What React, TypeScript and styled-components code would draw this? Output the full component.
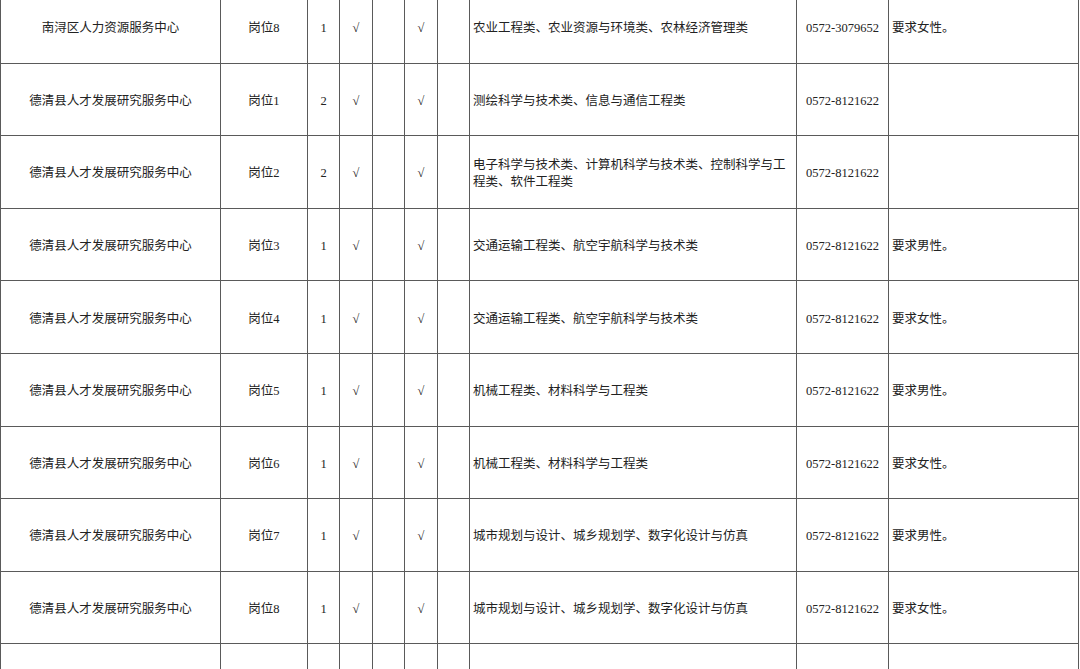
import React from 'react';
import styled, {createGlobalStyle} from 'styled-components';

type Job = {
  unit: string;
  post: string;
  count: string;
  a: boolean;
  b: boolean;
  major: string;
  phone: string;
  note: string;
};

const DQ = '德清县人才发展研究服务中心';
const PHONE = '0572-8121622';

const jobs: Job[] = [
  {unit: '南浔区人力资源服务中心', post: '岗位8', count: '1', a: true, b: true, major: '农业工程类、农业资源与环境类、农林经济管理类', phone: '0572-3079652', note: '要求女性。'},
  {unit: DQ, post: '岗位1', count: '2', a: true, b: true, major: '测绘科学与技术类、信息与通信工程类', phone: PHONE, note: ''},
  {unit: DQ, post: '岗位2', count: '2', a: true, b: true, major: '电子科学与技术类、计算机科学与技术类、控制科学与工程类、软件工程类', phone: PHONE, note: ''},
  {unit: DQ, post: '岗位3', count: '1', a: true, b: true, major: '交通运输工程类、航空宇航科学与技术类', phone: PHONE, note: '要求男性。'},
  {unit: DQ, post: '岗位4', count: '1', a: true, b: true, major: '交通运输工程类、航空宇航科学与技术类', phone: PHONE, note: '要求女性。'},
  {unit: DQ, post: '岗位5', count: '1', a: true, b: true, major: '机械工程类、材料科学与工程类', phone: PHONE, note: '要求男性。'},
  {unit: DQ, post: '岗位6', count: '1', a: true, b: true, major: '机械工程类、材料科学与工程类', phone: PHONE, note: '要求女性。'},
  {unit: DQ, post: '岗位7', count: '1', a: true, b: true, major: '城市规划与设计、城乡规划学、数字化设计与仿真', phone: PHONE, note: '要求男性。'},
  {unit: DQ, post: '岗位8', count: '1', a: true, b: true, major: '城市规划与设计、城乡规划学、数字化设计与仿真', phone: PHONE, note: '要求女性。'},
];

const widths = [220, 87, 32, 33, 32, 33, 32, 327, 92, 190];

const GlobalStyle = createGlobalStyle`
  html, body {
    margin: 0;
    padding: 0;
    background: #ffffff;
  }
  body {
    font-family: "Liberation Serif", "Noto Sans CJK SC", serif;
    color: #222;
  }
`;

const Page = styled.div`
  width: 1080px;
  height: 669px;
  overflow: hidden;
  background: #fff;
`;

const Sheet = styled.table`
  margin-top: -10px;
  table-layout: fixed;
  width: 1079px;
  border-collapse: collapse;
  font-size: 12.5px;
`;

const Row = styled.tr`
  height: 72.6px;
`;

const Cell = styled.td<{$align?: 'left' | 'center'}>`
  border: 1px solid #5a5a5a;
  padding: ${(p) => (p.$align === 'left' ? '4px 0 0 3px' : '4px 0 0 0')};
  text-align: ${(p) => p.$align ?? 'center'};
  vertical-align: middle;
  line-height: 17px;
  color: #222;
  overflow: hidden;
`;

const App: React.FC = () => {
  return (
    <>
      <GlobalStyle />
      <Page>
        <Sheet>
          <colgroup>
            {widths.map((w, i) => (
              <col key={i} style={{width: w}} />
            ))}
          </colgroup>
          <tbody>
            {jobs.map((j, i) => (
              <Row key={i}>
                <Cell>{j.unit}</Cell>
                <Cell>{j.post}</Cell>
                <Cell>{j.count}</Cell>
                <Cell>{j.a ? '√' : ''}</Cell>
                <Cell />
                <Cell>{j.b ? '√' : ''}</Cell>
                <Cell />
                <Cell $align="left">{j.major}</Cell>
                <Cell>{j.phone}</Cell>
                <Cell $align="left">{j.note}</Cell>
              </Row>
            ))}
            <Row>
              {widths.map((_, i) => (
                <Cell key={i} />
              ))}
            </Row>
          </tbody>
        </Sheet>
      </Page>
    </>
  );
};

export default App;
